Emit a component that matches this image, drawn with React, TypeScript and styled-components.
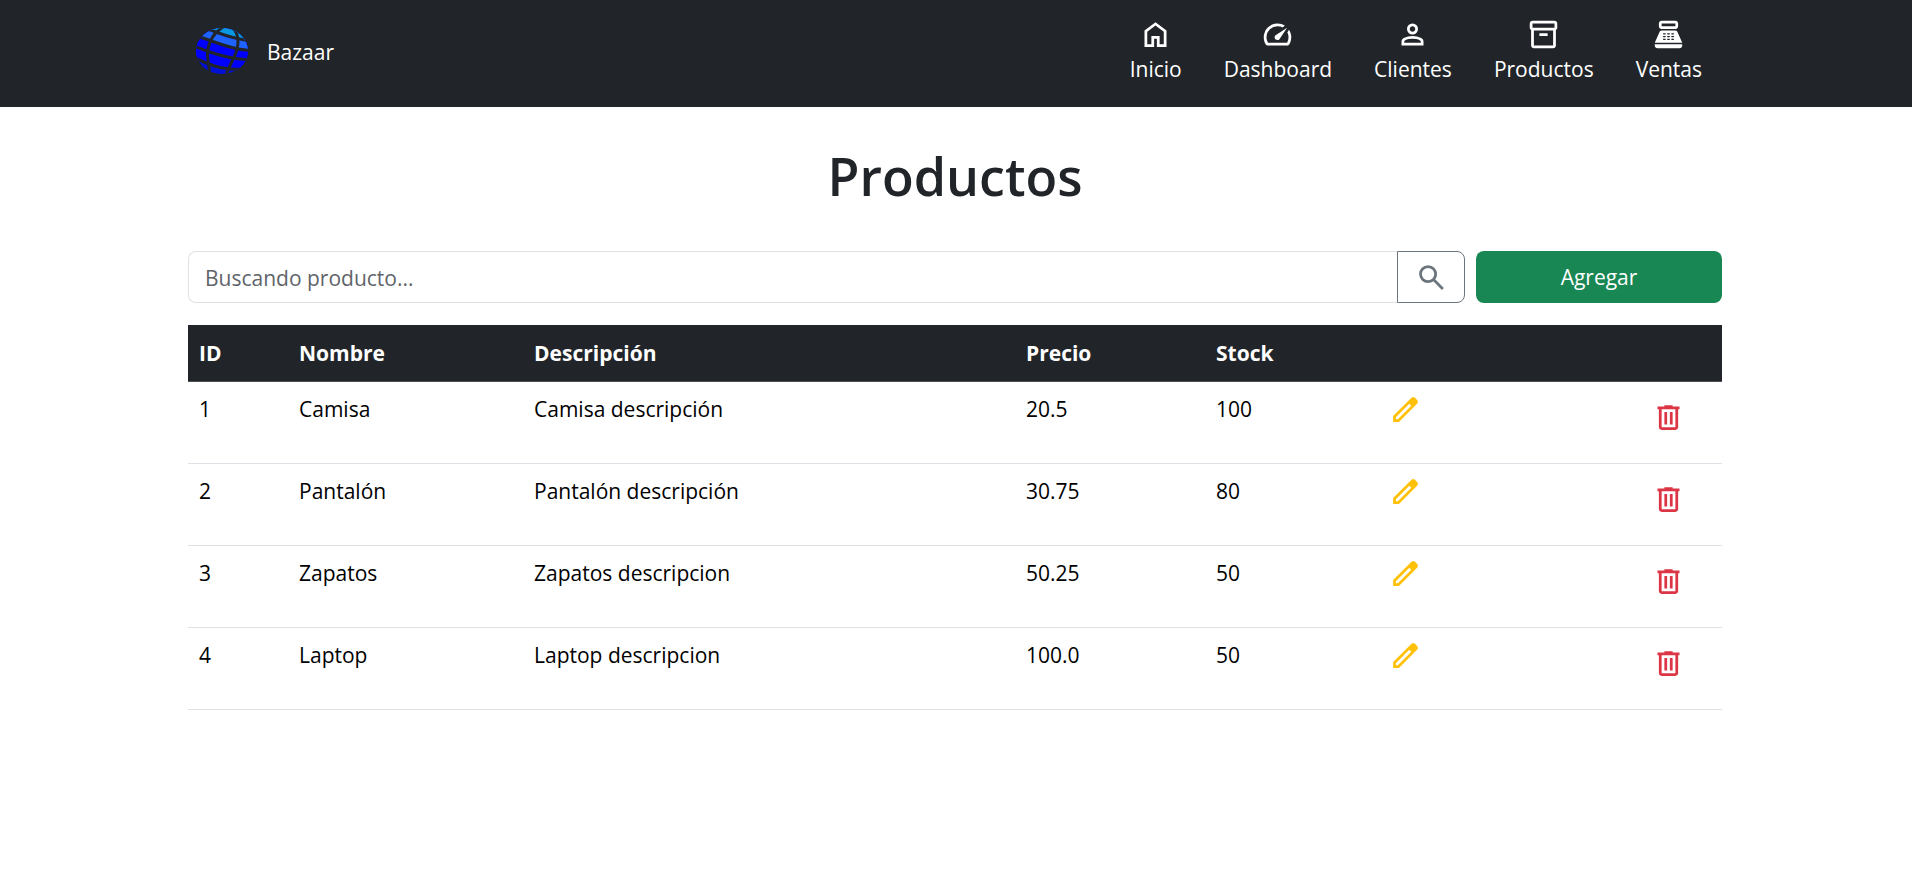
import React from "react";
import styled, { createGlobalStyle } from "styled-components";

const GlobalStyle = createGlobalStyle`
  *, *::before, *::after { box-sizing: border-box; }
  body {
    margin: 0;
    background: #fff;
    color: #212529;
    font-family: "Segoe UI", "Open Sans", "Noto Sans", sans-serif;
    font-size: 21px;
    line-height: 33px;
  }
  button, input { font: inherit; }
`;

const Container = styled.div`
  width: 100%;
  max-width: 1536px;
  margin: 0 auto;
`;

const Navbar = styled.header`
  background: #212529;
  color: #fff;
`;

const NavbarInner = styled(Container)`
  display: flex;
  align-items: flex-start;
  justify-content: space-between;
  padding: 18px 22px 20px 8px;
`;

const Brand = styled.a`
  display: flex;
  align-items: center;
  gap: 19px;
  height: 69px;
  color: #fff;
  text-decoration: none;
`;

const NavLinks = styled.nav`
  display: flex;
  gap: 42px;
`;

const NavLink = styled.a`
  display: flex;
  flex-direction: column;
  align-items: center;
  gap: 2px;
  color: #fff;
  text-decoration: none;
`;

const Symbol = styled.svg`
  display: block;
  width: 33px;
  height: 33px;
  fill: currentColor;
`;

const Main = styled(Container).attrs({ as: "main" })`
  padding: 36px 2px 36px 0;
`;

const Title = styled.h1`
  margin: 0 0 42px;
  font-size: 52px;
  font-weight: 600;
  line-height: 66px;
  text-align: center;
`;

const Toolbar = styled.div`
  display: flex;
  gap: 11px;
  margin-bottom: 22px;
`;

const SearchForm = styled.form`
  display: flex;
  flex: 1;
`;

const SearchInput = styled.input`
  flex: 1;
  min-width: 0;
  height: 52px;
  padding: 1px 16px 0;
  border: 1px solid #dee2e6;
  border-right: 0;
  border-radius: 8px 0 0 8px;
  background: #fff;
  color: #212529;
  outline: none;
  &::placeholder { color: #5f6469; opacity: 1; }
`;

const SearchButton = styled.button`
  display: flex;
  align-items: center;
  justify-content: center;
  width: 68px;
  padding: 0;
  border: 1px solid #6c757d;
  border-radius: 0 8px 8px 0;
  background: transparent;
  color: #6c757d;
  cursor: pointer;
`;

const AddButton = styled.button`
  width: 246px;
  padding: 1px 0 0;
  border: 0;
  border-radius: 8px;
  background: #198754;
  color: #fff;
  cursor: pointer;
`;

const Table = styled.table`
  width: 100%;
  table-layout: fixed;
  border-collapse: separate;
  border-spacing: 0;
`;

const Column = styled.col<{ $width?: number }>`
  width: ${({ $width }) => ($width ? `${$width}px` : "auto")};
`;

const HeadCell = styled.th`
  height: 57px;
  padding: 11px;
  border-bottom: 1px solid #4d5154;
  background: #212529;
  color: #fff;
  font-weight: 700;
  text-align: left;
`;

const Cell = styled.td`
  height: 82px;
  padding: 11px 11px 9px;
  border-bottom: 1px solid #dee2e6;
  color: #000;
  vertical-align: top;
`;

const EditLink = styled.a`
  display: inline-block;
  vertical-align: top;
  color: #ffc107;
`;

const DeleteButton = styled.button`
  display: block;
  padding: 8px 16px;
  border: 0;
  background: transparent;
  color: #dc3545;
  cursor: pointer;
`;

const icons = {
  home: "M240-200h120v-240h240v240h120v-360L480-740 240-560v360Zm-80 80v-480l320-240 320 240v480H520v-240h-80v240H160Z",
  speed:
    "M418-340q24 24 62 23.5t56-27.5l224-336-336 224q-27 18-28.5 55t22.5 61Zm62-460q59 0 113.5 16.5T696-734l-76 48q-33-17-68.5-25.5T480-720q-133 0-226.5 93.5T160-400q0 42 11.5 83t32.5 77h552q23-38 33.5-79t10.5-85q0-36-8.5-70T766-540l48-76q30 47 47.5 100T880-406q1 57-13 109t-41 99q-11 18-30 28t-40 10H204q-21 0-40-10t-30-28q-26-45-40-95.5T80-400q0-83 31.5-155.5t86-127Q252-737 325-768.5T480-800Z",
  person:
    "M480-480q-66 0-113-47t-47-113q0-66 47-113t113-47q66 0 113 47t47 113q0 66-47 113t-113 47ZM160-160v-112q0-34 17.5-62.5T224-378q62-31 126-46.5T480-440q66 0 130 15.5T736-378q29 15 46.5 43.5T800-272v112H160Zm80-80h480v-32q0-11-5.5-20T700-306q-54-27-109-40.5T480-360q-56 0-111 13.5T260-306q-9 5-14.5 14t-5.5 20v32Zm240-320q33 0 56.5-23.5T560-640q0-33-23.5-56.5T480-720q-33 0-56.5 23.5T400-640q0 33 23.5 56.5T480-560Z",
  inventory:
    "M200-80q-33 0-56.5-23.5T120-160v-451q-18-11-29-28.5T80-680v-120q0-33 23.5-56.5T160-880h640q33 0 56.5 23.5T880-800v120q0 23-11 40.5T840-611v451q0 33-23.5 56.5T760-80H200Zm0-520v440h560v-440H200Zm-40-80h640v-120H160v120Zm200 240h240v-80H360v80Z",
  register:
    "M280-640q-33 0-56.5-23.5T200-720v-80q0-33 23.5-56.5T280-880h400q33 0 56.5 23.5T760-800v80q0 33-23.5 56.5T680-640H280Zm0-80h400v-80H280v80ZM160-80q-33 0-56.5-23.5T80-160v-40h800v40q0 33-23.5 56.5T800-80H160ZM80-240l139-313q10-22 30-34.5t43-12.5h376q23 0 43 12.5t30 34.5l139 313H80ZM340-320h40q8 0 14-6t6-14q0-8-6-14t-14-6h-40q-8 0-14 6t-6 14q0 8 6 14t14 6Zm0-80h40q8 0 14-6t6-14q0-8-6-14t-14-6h-40q-8 0-14 6t-6 14q0 8 6 14t14 6Zm0-80h40q8 0 14-6t6-14q0-8-6-14t-14-6h-40q-8 0-14 6t-6 14q0 8 6 14t14 6Zm120 160h40q8 0 14-6t6-14q0-8-6-14t-14-6h-40q-8 0-14 6t-6 14q0 8 6 14t14 6Zm0-80h40q8 0 14-6t6-14q0-8-6-14t-14-6h-40q-8 0-14 6t-6 14q0 8 6 14t14 6Zm0-80h40q8 0 14-6t6-14q0-8-6-14t-14-6h-40q-8 0-14 6t-6 14q0 8 6 14t14 6Zm120 160h40q8 0 14-6t6-14q0-8-6-14t-14-6h-40q-8 0-14 6t-6 14q0 8 6 14t14 6Zm0-80h40q8 0 14-6t6-14q0-8-6-14t-14-6h-40q-8 0-14 6t-6 14q0 8 6 14t14 6Zm0-80h40q8 0 14-6t6-14q0-8-6-14t-14-6h-40q-8 0-14 6t-6 14q0 8 6 14t14 6Z",
  search:
    "M784-120 532-372q-30 24-69 38t-83 14q-109 0-184.5-75.5T120-580q0-109 75.5-184.5T380-840q109 0 184.5 75.5T640-580q0 44-14 83t-38 69l252 252-56 56ZM380-400q75 0 127.5-52.5T560-580q0-75-52.5-127.5T380-760q-75 0-127.5 52.5T200-580q0 75 52.5 127.5T380-400Z",
  edit: "M200-200h57l391-391-57-57-391 391v57Zm-80 80v-170l528-527q12-11 26.5-17t30.5-6q16 0 31 6t26 18l55 56q12 11 17.5 26t5.5 30q0 16-5.5 30.5T817-647L290-120H120Z",
  trash:
    "M280-120q-33 0-56.5-23.5T200-200v-520h-40v-80h200v-40h240v40h200v80h-40v520q0 33-23.5 56.5T680-120H280Zm400-600H280v520h400v-520ZM360-280h80v-360h-80v360Zm160 0h80v-360h-80v360Z",
};

const Icon = ({ name }: { name: keyof typeof icons }) => (
  <Symbol viewBox="0 -960 960 960" aria-hidden="true">
    <path fillRule="evenodd" d={icons[name]} />
  </Symbol>
);

const Logo = () => (
  <svg width="52" height="50" viewBox="0 0 52 50" aria-hidden="true">
    <defs>
      <clipPath id="globe">
        <ellipse cx="26" cy="23" rx="26" ry="23" />
      </clipPath>
    </defs>
    <g clipPath="url(#globe)">
      <rect width="52" height="46" fill="#0010d8" />
      <path d="M-2 0H54V43Q34 43 17 37.500T-2 30Z" fill="#0000ff" />
      <path d="M-2 0H54V23Q36 20 17 13.500T-2 6Z" fill="#1e62ff" />
      <path d="M8 -1H54V13Q36 9.500 26 6T8 1Z" fill="#0a98e0" />
      <g fill="none" stroke="#212529" strokeWidth="3">
        <path d="M12 1Q22 5 30 7.500T54 13" />
        <path d="M2 8.500Q9 10.500 17 13.500T34 19T54 22.500" />
        <path d="M-2 18Q8 22 17 25T34 29.500T54 32" />
        <path d="M-2 29.500Q8 34.500 17 37.500T34 41T50 41" />
        <path d="M27 -1Q18 5 14.500 13T11.500 27T14 46" />
        <path d="M36 -1Q42 5 42 13T38.500 28T30 47" />
      </g>
    </g>
  </svg>
);

const links: { label: string; icon: keyof typeof icons }[] = [
  { label: "Inicio", icon: "home" },
  { label: "Dashboard", icon: "speed" },
  { label: "Clientes", icon: "person" },
  { label: "Productos", icon: "inventory" },
  { label: "Ventas", icon: "register" },
];

const products = [
  { id: 1, name: "Camisa", description: "Camisa descripción", price: "20.5", stock: 100 },
  { id: 2, name: "Pantalón", description: "Pantalón descripción", price: "30.75", stock: 80 },
  { id: 3, name: "Zapatos", description: "Zapatos descripcion", price: "50.25", stock: 50 },
  { id: 4, name: "Laptop", description: "Laptop descripcion", price: "100.0", stock: 50 },
];

export default function App() {
  return (
    <>
      <GlobalStyle />
      <Navbar>
        <NavbarInner>
          <Brand href="#">
            <Logo />
            Bazaar
          </Brand>
          <NavLinks>
            {links.map(({ label, icon }) => (
              <NavLink href="#" key={label}>
                <Icon name={icon} />
                {label}
              </NavLink>
            ))}
          </NavLinks>
        </NavbarInner>
      </Navbar>
      <Main>
        <Title>Productos</Title>
        <Toolbar>
          <SearchForm role="search" onSubmit={(e) => e.preventDefault()}>
            <SearchInput type="text" aria-label="Buscar producto" placeholder="Buscando producto..." />
            <SearchButton type="submit" aria-label="Buscar">
              <Icon name="search" />
            </SearchButton>
          </SearchForm>
          <AddButton type="button">Agregar</AddButton>
        </Toolbar>
        <Table>
          <colgroup>
            <Column $width={100} />
            <Column $width={235} />
            <Column />
            <Column $width={190} />
            <Column $width={173} />
            <Column $width={247} />
            <Column $width={97} />
          </colgroup>
          <thead>
            <tr>
              {["ID", "Nombre", "Descripción", "Precio", "Stock"].map((heading) => (
                <HeadCell scope="col" key={heading}>
                  {heading}
                </HeadCell>
              ))}
              <HeadCell as="td" />
              <HeadCell as="td" />
            </tr>
          </thead>
          <tbody>
            {products.map((product) => (
              <tr key={product.id}>
                <Cell>{product.id}</Cell>
                <Cell>{product.name}</Cell>
                <Cell>{product.description}</Cell>
                <Cell>{product.price}</Cell>
                <Cell>{product.stock}</Cell>
                <Cell>
                  <EditLink href="#" aria-label={`Editar ${product.name}`}>
                    <Icon name="edit" />
                  </EditLink>
                </Cell>
                <Cell>
                  <DeleteButton type="button" aria-label={`Eliminar ${product.name}`}>
                    <Icon name="trash" />
                  </DeleteButton>
                </Cell>
              </tr>
            ))}
          </tbody>
        </Table>
      </Main>
    </>
  );
}
